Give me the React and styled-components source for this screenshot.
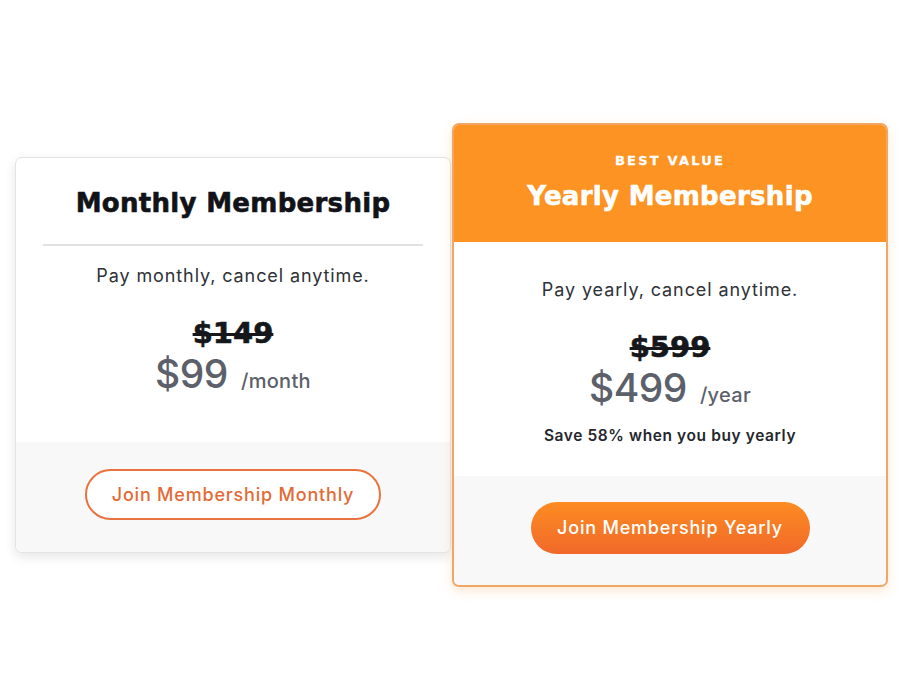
import styled, { createGlobalStyle } from "styled-components";

const GlobalStyle = createGlobalStyle`
  body {
    margin: 0;
    background: #ffffff;
    font-family: "Inter", "Liberation Sans", Arial, sans-serif;
  }
`;

function App() {
  return (
    <>
      <GlobalStyle />
      <PageSt>
        <CardSt>
          <HeadSt>
            <TitleSt>Monthly Membership</TitleSt>
          </HeadSt>
          <DividerSt />
          <BodySt $top={18} $bottom={38}>
            <SubSt>Pay monthly, cancel anytime.</SubSt>
            <OldPriceSt>$149</OldPriceSt>
            <PriceSt>
              $99<PerSt>/month</PerSt>
            </PriceSt>
          </BodySt>
          <FootSt $top={27} $bottom={32}>
            <OutlineBtn>Join Membership Monthly</OutlineBtn>
          </FootSt>
        </CardSt>

        <CardSt $featured>
          <BannerSt>
            <BadgeSt>BEST VALUE</BadgeSt>
            <TitleSt $light>Yearly Membership</TitleSt>
          </BannerSt>
          <BodySt $top={36} $bottom={30}>
            <SubSt>Pay yearly, cancel anytime.</SubSt>
            <OldPriceSt>$599</OldPriceSt>
            <PriceSt>
              $499<PerSt>/year</PerSt>
            </PriceSt>
            <SaveSt>Save 58% when you buy yearly</SaveSt>
          </BodySt>
          <FootSt $top={26} $bottom={31}>
            <FilledBtn>Join Membership Yearly</FilledBtn>
          </FootSt>
        </CardSt>
      </PageSt>
    </>
  );
}

export default App;

const PageSt = styled.div`
  display: flex;
  align-items: center;
  gap: 1px;
  height: 700px;
  box-sizing: border-box;
  padding: 9px 12px 0 15px;
`;

const CardSt = styled.div`
  width: 436px;
  box-sizing: border-box;
  display: flex;
  flex-direction: column;
  background: #ffffff;
  border-radius: 7px;
  overflow: hidden;
  border: ${(p) => (p.$featured ? "2px solid #f2a664" : "1px solid #e4e4e4")};
  box-shadow: ${(p) =>
    p.$featured
      ? "0 4px 12px rgba(245, 150, 60, 0.22)"
      : "0 4px 12px rgba(0, 0, 0, 0.10)"};
`;

const HeadSt = styled.div`
  padding: 28px 20px 24px;
  text-align: center;
`;

const BannerSt = styled.div`
  background: #fc9322;
  padding: 28px 20px 29px;
  display: flex;
  flex-direction: column;
  align-items: center;
  gap: 10px;
`;

const BadgeSt = styled.div`
  color: #ffffff;
  font-family: "DejaVu Sans", "Liberation Sans", sans-serif;
  font-weight: 700;
  font-size: 13px;
  line-height: 16px;
  letter-spacing: 2.2px;
  -webkit-text-stroke: 0.3px currentColor;
`;

const TitleSt = styled.div`
  color: ${(p) => (p.$light ? "#ffffff" : "#111318")};
  font-family: "DejaVu Sans", "Liberation Sans", sans-serif;
  font-weight: 700;
  font-size: 26px;
  line-height: 34px;
  letter-spacing: 0.3px;
  text-align: center;
  -webkit-text-stroke: 0.6px currentColor;
`;

const DividerSt = styled.div`
  height: 2px;
  background: #e2e2e2;
  margin: 0 27px;
`;

const BodySt = styled.div`
  display: flex;
  flex-direction: column;
  align-items: center;
  padding: ${(p) => p.$top}px 20px ${(p) => p.$bottom}px;
  background: #ffffff;
`;

const SubSt = styled.div`
  font-size: 18px;
  line-height: 24px;
  color: #2f3237;
  letter-spacing: 0.9px;
`;

const OldPriceSt = styled.div`
  margin-top: 27px;
  font-family: "DejaVu Sans", "Liberation Sans", sans-serif;
  font-weight: 700;
  font-size: 29px;
  line-height: 36px;
  color: #15171b;
  text-decoration: line-through;
  text-decoration-thickness: 3px;
  -webkit-text-stroke: 0.6px currentColor;
`;

const PriceSt = styled.div`
  font-size: 39px;
  line-height: 46px;
  font-weight: 500;
  color: #5b606a;
  letter-spacing: -0.5px;
`;

const PerSt = styled.span`
  font-size: 20px;
  font-weight: 500;
  margin-left: 13px;
  letter-spacing: 0.3px;
`;

const SaveSt = styled.div`
  margin-top: 8px;
  font-size: 15.5px;
  line-height: 20px;
  font-weight: 600;
  color: #24272c;
  letter-spacing: 0.6px;
`;

const FootSt = styled.div`
  flex: 1;
  display: flex;
  justify-content: center;
  background: #f8f8f8;
  padding: ${(p) => p.$top}px 20px ${(p) => p.$bottom}px;
`;

const OutlineBtn = styled.button`
  width: 296px;
  height: 51px;
  border-radius: 26px;
  border: 2px solid #e8733f;
  background: #ffffff;
  color: #e36a35;
  font-family: "Inter", "Liberation Sans", Arial, sans-serif;
  font-size: 18px;
  font-weight: 500;
  letter-spacing: 0.8px;
  cursor: pointer;
`;

const FilledBtn = styled.button`
  width: 279px;
  height: 52px;
  border-radius: 26px;
  border: none;
  background: linear-gradient(180deg, #fd8c22 0%, #f0692a 100%);
  color: #ffffff;
  font-family: "Inter", "Liberation Sans", Arial, sans-serif;
  font-size: 18px;
  font-weight: 500;
  letter-spacing: 0.8px;
  cursor: pointer;
`;
